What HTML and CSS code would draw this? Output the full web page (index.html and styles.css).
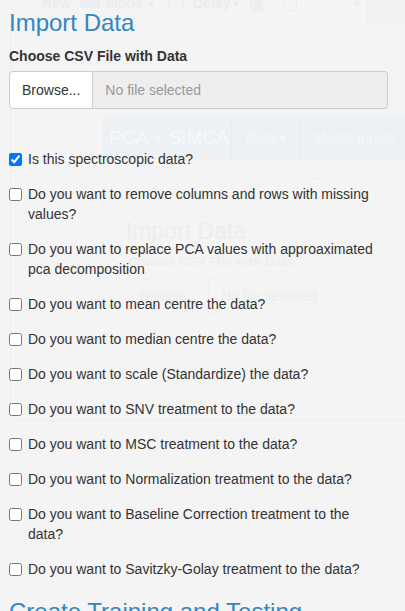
FILE: index.html
```html
<!DOCTYPE html>
<html>
<head>
<meta charset="utf-8">
<link rel="stylesheet" href="styles.css">
</head>
<body>
<div class="ghost" aria-hidden="true">
  <div class="g-toolbar">
    <span class="g-item g-new">New</span>
    <span class="g-iconbox g-modeicon"></span>
    <span class="g-item g-mode">Mode</span>
    <span class="g-caret g-c1">▾</span>
    <span class="g-circle"></span>
    <span class="g-item g-delay">Delay</span>
    <span class="g-caret g-c2">▾</span>
    <span class="g-square g-s1"></span>
    <span class="g-square g-s2"></span>
    <span class="g-caret g-c3">▾</span>
    <span class="g-pen"></span>
  </div>
  <div class="g-panel"></div>
  <div class="g-nav">
    <span class="g-brand">PCA + SIMCA</span>
    <span class="g-navitem g-data">Data ▾</span>
    <span class="g-navitem g-model">Model Inputs ▾</span>
  </div>
  <div class="g-line"></div>
  <div class="g-title">Import Data</div>
  <div class="g-label">Choose CSV File with Data</div>
  <div class="g-file">
    <span class="g-browse">Browse...</span>
    <span class="g-nofile">No file selected</span>
  </div>
</div>

<div class="main">
  <h3 class="title">Import Data</h3>
  <label class="field-label">Choose CSV File with Data</label>
  <div class="file-input">
    <span class="browse-btn">Browse...</span>
    <span class="file-name">No file selected</span>
  </div>

  <div class="checks">
    <label class="check"><input type="checkbox" checked><span>Is this spectroscopic data?</span></label>
    <label class="check"><input type="checkbox"><span>Do you want to remove columns and rows with missing values?</span></label>
    <label class="check"><input type="checkbox"><span>Do you want to replace PCA values with approaximated pca decomposition</span></label>
    <label class="check"><input type="checkbox"><span>Do you want to mean centre the data?</span></label>
    <label class="check"><input type="checkbox"><span>Do you want to median centre the data?</span></label>
    <label class="check"><input type="checkbox"><span>Do you want to scale (Standardize) the data?</span></label>
    <label class="check"><input type="checkbox"><span>Do you want to SNV treatment to the data?</span></label>
    <label class="check"><input type="checkbox"><span>Do you want to MSC treatment to the data?</span></label>
    <label class="check"><input type="checkbox"><span>Do you want to Normalization treatment to the data?</span></label>
    <label class="check"><input type="checkbox"><span>Do you want to Baseline Correction treatment to the data?</span></label>
    <label class="check"><input type="checkbox"><span>Do you want to Savitzky-Golay treatment to the data?</span></label>
  </div>

  <h3 class="title next">Create Training and Testing</h3>
</div>
</body>
</html>
```

FILE: styles.css
```css
html, body {
  margin: 0;
  padding: 0;
  height: 100%;
  overflow: hidden;
}

body {
  background: #f4f4f4;
  font-family: "Liberation Sans", Arial, sans-serif;
  font-size: 14px;
  color: #333;
  position: relative;
}

/* ---- faint background picture ---- */
.ghost {
  position: absolute;
  inset: 0;
  pointer-events: none;
  z-index: 0;
}
.ghost span, .ghost div { position: absolute; }

.g-toolbar {
  left: 0; top: 0; width: 405px; height: 25px;
  border-bottom: 1px solid #efefef;
}
.g-item {
  top: -5px;
  font-size: 14px;
  font-weight: bold;
  color: #ececec;
}
.g-new { left: 42px; }
.g-mode { left: 106px; }
.g-delay { left: 193px; }
.g-caret { top: -4px; font-size: 12px; color: #ececec; }
.g-c1 { left: 148px; }
.g-c2 { left: 233px; }
.g-c3 { left: 354px; }
.g-iconbox { left: 80px; top: 0; width: 20px; height: 8px; background: #eaeef2; }
.g-circle { left: 168px; top: -4px; width: 14px; height: 14px; border: 1px solid #ececec; border-radius: 50%; }
.g-square { top: -1px; width: 11px; height: 10px; border: 1px solid #ececec; }
.g-s1 { left: 250px; background: #eeeeee; }
.g-s2 { left: 284px; }
.g-pen { left: 366px; top: 0; width: 39px; height: 24px; border-left: 1px solid #efefef; background: #f2f2f2; }

.g-panel {
  left: 10px; top: 25px; width: 395px; height: 395px;
  border-left: 1px solid #eeeeee;
  border-bottom: 1px solid #eeeeee;
}
.g-nav {
  left: 102px; top: 116px; width: 303px; height: 44px;
  background: #eef1f4;
}
.g-brand {
  left: 7px; top: 11px;
  font-size: 19px;
  color: #f6f8fa;
}
.g-navitem {
  font-size: 14px;
  color: #f5f7f9;
  padding-left: 14px;
  border-left: 1px solid #eaedf0;
  height: 44px; top: 0; line-height: 44px;
}
.g-data { left: 129px; }
.g-model { left: 198px; }
.g-line {
  left: 102px; top: 178px; width: 303px; height: 1px;
  background: #f0f0f0;
}
.g-title {
  left: 126px; top: 218px;
  font-size: 23px;
  color: #ededed;
}
.g-label {
  left: 128px; top: 254px;
  font-size: 13px;
  font-weight: bold;
  color: #eeeeee;
}
.g-file {
  left: 126px; top: 278px; width: 279px; height: 34px;
  border-top: 1px solid #efefef;
  border-bottom: 1px solid #efefef;
}
.g-browse { left: 14px; top: 9px; color: #ededed; font-size: 14px; }
.g-nofile {
  left: 82px; top: 0; height: 34px; line-height: 34px;
  padding-left: 12px;
  border-left: 1px solid #efefef;
  color: #ededed;
}

/* ---- main content ---- */
.main {
  position: relative;
  z-index: 1;
  padding: 10px 17px 0 9px;
}

.title {
  margin: 0 0 10px;
  font-size: 24px;
  font-weight: normal;
  line-height: 1.1;
  color: #3386c1;
}

.field-label {
  display: block;
  font-weight: bold;
  line-height: 20px;
  margin-bottom: 5px;
}

.file-input {
  display: flex;
  height: 38px;
  box-sizing: border-box;
}
.browse-btn {
  display: flex;
  align-items: center;
  padding: 0 12px;
  background: #fff;
  border: 1px solid #cccccc;
  border-radius: 4px 0 0 4px;
  color: #333;
}
.file-name {
  flex: 1;
  display: flex;
  align-items: center;
  padding: 0 12px;
  background: #eeeeee;
  border: 1px solid #cccccc;
  border-left: none;
  border-radius: 0 4px 4px 0;
  color: #999;
}

.checks {
  display: flex;
  flex-direction: column;
  gap: 15px;
  margin-top: 40px;
  padding-right: 6px;
}
.check {
  display: flex;
  align-items: flex-start;
  line-height: 20px;
  cursor: pointer;
}
.check input {
  margin: 4px 6px 0 0;
  width: 13px;
  height: 13px;
  flex: none;
}

.title.next {
  margin-top: 20px;
}
```
